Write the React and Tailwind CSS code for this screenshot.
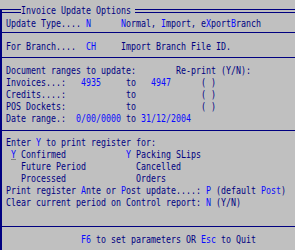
import React from "react";

function L({ children }) {
  return (
    <div className="ml-[4px] h-[12px] whitespace-pre origin-left scale-x-[0.755]">
      {children}
    </div>
  );
}

function B({ children }) {
  return <span className="text-[#0a0aff]">{children}</span>;
}

function Sep() {
  return <div className="h-px bg-[#000080]" />;
}

export default function App() {
  return (
    <div className="w-[295px] h-[250px] overflow-hidden bg-[#c0c0c0] font-['DejaVu_Sans_Mono',monospace] text-[11px] leading-[12px] text-[#000080]">
      <div className="flex h-[18px]">
        <div className="w-[21px] h-[9px] mt-[9px] border-t border-l-2 border-[#000080]">
          <div className="mt-[2px] border-t border-[#000080]" />
        </div>
        <div className="w-[114px] pt-[5px]">
          <div className="h-[12px] whitespace-pre origin-left scale-x-[0.755]">Invoice Update Options</div>
        </div>
        <div className="flex-1 h-[9px] mt-[9px] border-t border-[#000080]">
          <div className="mt-[2px] border-t border-[#000080]" />
        </div>
      </div>
      <div className="flex flex-col h-[232px] border-l-2 border-[#000080]">
        <L>
          {"Update Type.... "}<B>N</B>{"      "}<B>N</B>{"ormal, "}<B>I</B>{"mport, e"}<B>X</B>{"port"}<B>B</B>{"ranch"}
        </L>
        <div className="h-[2px]" />
        <Sep />
        <div className="h-[8px]" />
        <L>
          {"For Branch....  "}<B>CH</B>{"     Import Branch File ID."}
        </L>
        <div className="h-[4px]" />
        <Sep />
        <div className="h-[7px]" />
        <L>{"Document ranges to update:        Re-print (Y/N):"}</L>
        <L>
          {"Invoices...:   "}<B>4935</B>{"     to   "}<B>4947</B>{"      ( )"}
        </L>
        <L>{"Credits....:            to             ( )"}</L>
        <L>{"POS Dockets:            to             ( )"}</L>
        <L>
          {"Date range.:  "}<B>0/00/0000</B>{" to "}<B>31/12/2004</B>
        </L>
        <div className="h-[5px]" />
        <Sep />
        <div className="h-[6px]" />
        <L>
          {"Enter "}<B>Y</B>{" to print register for:"}
        </L>
        <L>
          {" "}
          <span className="text-[#0a0aff] underline decoration-[#808080] underline-offset-[1px]">Y</span>
          {" Confirmed            "}<B>Y</B>{" Packing SLips"}
        </L>
        <L>{"   Future Period          Cancelled"}</L>
        <L>{"   Processed              Orders"}</L>
        <L>
          {"Print register "}<B>A</B>{"nte or "}<B>P</B>{"ost update....: "}<B>P</B>{" (default "}<B>Post</B>{")"}
        </L>
        <L>
          {"Clear current period on Control report: "}<B>N</B>{" (Y/N)"}
        </L>
        <div className="h-[17px]" />
        <Sep />
        <div className="h-[7px]" />
        <L>
          {"               "}<B>F6</B>{" to set parameters OR "}<B>Esc</B>{" to Quit"}
        </L>
      </div>
    </div>
  );
}
